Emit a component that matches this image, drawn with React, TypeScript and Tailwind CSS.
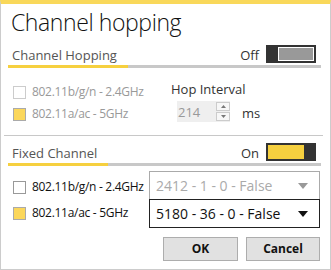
import React from "react";

const FONT = { fontFamily: '"Open Sans", "Noto Sans", sans-serif' };

/**
 * Toggle
 *
 * Flat two-part switch: dark knob plus bordered track.
 */
function Toggle({ on }: { on: boolean }) {
  if (on) {
    return (
      <div className="flex h-[18px] w-[50px]">
        <div className="flex-1 border-2 border-[#333] bg-[#f6d03f]" />
        <div className="w-[10px] bg-[#333]" />
      </div>
    );
  }

  return (
    <div className="flex h-[18px] w-[50px]">
      <div className="w-[10px] bg-[#333]" />
      <div className="flex-1 border-2 border-[#333] bg-white p-px">
        <div className="h-full w-full bg-[#999]" />
      </div>
    </div>
  );
}

/**
 * SectionHeader
 *
 * Label + toggle with a partially yellow underline.
 */
function SectionHeader({
  label,
  state,
  accent,
}: {
  label: string;
  state: boolean;
  accent: number;
}) {
  return (
    <div>
      <div className="flex h-[23px] items-center pl-[11px] pr-[14px]">
        <span className="mt-[3px] text-[13px] leading-[18px] text-[#555]">
          {label}
        </span>
        <span className="ml-auto mr-[7px] mt-[3px] text-[13px] leading-[18px] text-[#333]">
          {state ? "On" : "Off"}
        </span>
        <Toggle on={state} />
      </div>
      <div className="ml-[7px] flex h-[3px] w-[313px] bg-[#c8c8c8]">
        <div className="h-full bg-[#f6d03f]" style={{ width: accent }} />
      </div>
    </div>
  );
}

/**
 * CheckRow
 *
 * Square checkbox with a label; checked boxes are filled yellow.
 */
function CheckRow({
  label,
  checked,
  muted,
}: {
  label: string;
  checked: boolean;
  muted: boolean;
}) {
  let box = "h-[13px] w-[13px] shrink-0 border bg-white";
  if (checked) {
    box = "h-[13px] w-[13px] shrink-0 border border-[#aaa] bg-[#fbd75b]";
  } else if (muted) {
    box += " border-[#ccc]";
  } else {
    box += " border-[#999]";
  }

  return (
    <div className="flex h-[16px] items-center">
      <div className={box} />
      <span
        className={
          muted
            ? "ml-[6px] whitespace-nowrap text-[12px] leading-[16px] tracking-[-0.3px] text-[#999]"
            : "ml-[6px] whitespace-nowrap text-[12px] leading-[16px] tracking-[-0.3px] text-[#111]"
        }
      >
        {label}
      </span>
    </div>
  );
}

/**
 * Caret
 *
 * Small down-pointing triangle for the dropdowns.
 */
function Caret({ color }: { color: string }) {
  return (
    <svg width="10" height="6" viewBox="0 0 10 6">
      <path d="M0 0 H10 L5 6 Z" fill={color} />
    </svg>
  );
}

export default function App() {
  return (
    <div
      className="h-[270px] w-[331px] overflow-hidden border border-t-4 border-[#cccccc] border-t-[#f9d85a] bg-white"
      style={FONT}
    >
      {/* Step 1: Title */}
      <div className="h-[38px] whitespace-nowrap pl-[10px] text-[23px] font-light leading-[36px] tracking-[-0.4px] text-[#111]">
        Channel hopping
      </div>

      {/* Step 2: Channel hopping section */}
      <SectionHeader label="Channel Hopping" state={false} accent={120} />

      <div className="flex h-[67px] pl-[12px] pt-[16px]">
        <div className="flex w-[158px] flex-col gap-[6px]">
          <CheckRow label="802.11b/g/n - 2.4GHz" checked={false} muted />
          <CheckRow label="802.11a/ac - 5GHz" checked muted />
        </div>
        <div className="flex flex-col">
          <span className="-mt-[4px] text-[13px] leading-[18px] text-[#333]">
            Hop Interval
          </span>
          <div className="mt-[3px] flex items-center">
            <div className="ml-[6px] flex h-[21px] w-[53px] items-center bg-[#efefef]">
              <span className="flex-1 pl-px text-[13px] leading-[18px] text-[#999]">
                214
              </span>
              <div className="flex h-[21px] w-[14px] flex-col justify-center gap-px">
                <div className="flex h-[9px] items-center justify-center border border-[#ccc] bg-[#f7f7f7]">
                  <svg width="5" height="3" viewBox="0 0 5 3">
                    <path d="M0 3 H5 L2.5 0 Z" fill="#777" />
                  </svg>
                </div>
                <div className="flex h-[9px] items-center justify-center border border-[#ccc] bg-[#f7f7f7]">
                  <svg width="5" height="3" viewBox="0 0 5 3">
                    <path d="M0 0 H5 L2.5 3 Z" fill="#777" />
                  </svg>
                </div>
              </div>
            </div>
            <span className="ml-[12px] mt-[3px] text-[13px] leading-[18px] text-[#333]">
              ms
            </span>
          </div>
        </div>
      </div>

      <div className="ml-[3px] h-px w-[319px] bg-[#c8c8c8]" />

      {/* Step 3: Fixed channel section */}
      <div className="h-[4px]" />
      <SectionHeader label="Fixed Channel" state accent={100} />

      <div className="flex pt-[5px]">
        <div className="flex w-[148px] flex-col gap-[10px] pl-[12px] pt-[8px]">
          <CheckRow label="802.11b/g/n - 2.4GHz" checked={false} muted={false} />
          <CheckRow label="802.11a/ac - 5GHz" checked muted={false} />
        </div>
        <div className="flex w-[171px] flex-col">
          <div className="flex h-[29px] items-center border border-[#aaa] bg-white pl-[6px] pr-[11px]">
            <span className="flex-1 whitespace-nowrap text-[14px] text-[#aaa]">
              2412 - 1 - 0 - False
            </span>
            <Caret color="#999" />
          </div>
          <div className="-mt-px flex h-[29px] items-center border border-[#222] bg-white pl-[6px] pr-[11px]">
            <span className="flex-1 whitespace-nowrap text-[14px] text-[#111]">
              5180 - 36 - 0 - False
            </span>
            <Caret color="#111" />
          </div>
        </div>
      </div>

      {/* Step 4: Dialog buttons */}
      <div className="mt-[9px] flex justify-end gap-[8px] pr-[10px]">
        <button className="h-[24px] w-[75px] border border-[#adadad] bg-[#e1e1e1] text-[12px] font-bold text-[#111]">
          OK
        </button>
        <button className="h-[24px] w-[74px] border border-[#adadad] bg-[#e1e1e1] text-[12px] font-bold text-[#111]">
          Cancel
        </button>
      </div>
    </div>
  );
}
